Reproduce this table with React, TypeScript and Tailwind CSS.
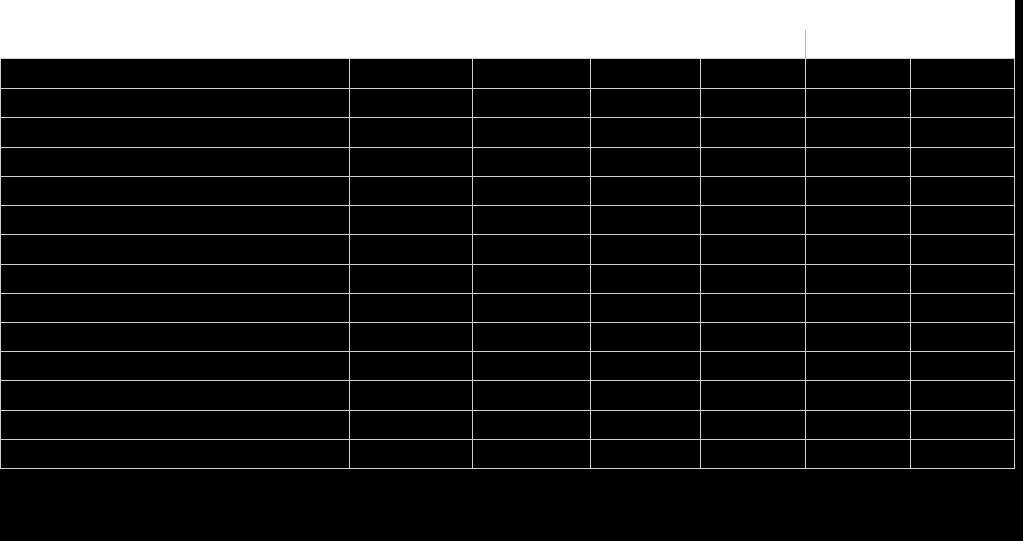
import React from "react";

const rowHeights = [30, 29, 30, 29, 29, 29, 30, 29, 29, 29, 29, 30, 29, 30];
const colClasses = [
  "border-l border-[#d0d0d0]",
  "border-l border-[#d0d0d0]",
  "border-l border-[#d0d0d0]",
  "border-l border-[#d0d0d0]",
  "border-l border-[#d0d0d0]",
  "border-l border-[#d0d0d0]",
  "border-l border-r border-[#d0d0d0]",
];

export default function App() {
  return (
    <div className="w-[1023px] h-[541px] bg-black overflow-hidden font-['Liberation_Sans',sans-serif]">
      <div className="w-[1015px] h-[58px] bg-white flex items-end">
        <div className="w-[805px]" />
        <div className="h-[28px] border-l border-[#b0b0b0]" />
      </div>
      <div className="w-[1015px] flex flex-col">
        {rowHeights.map((h, i) => (
          <div
            key={i}
            style={{ height: h }}
            className={
              "grid grid-cols-[349px_123px_118px_110px_105px_105px_105px] border-t border-[#d0d0d0]" +
              (i === rowHeights.length - 1 ? " border-b" : "")
            }
          >
            {colClasses.map((c, j) => (
              <div key={j} className={c} />
            ))}
          </div>
        ))}
      </div>
    </div>
  );
}
